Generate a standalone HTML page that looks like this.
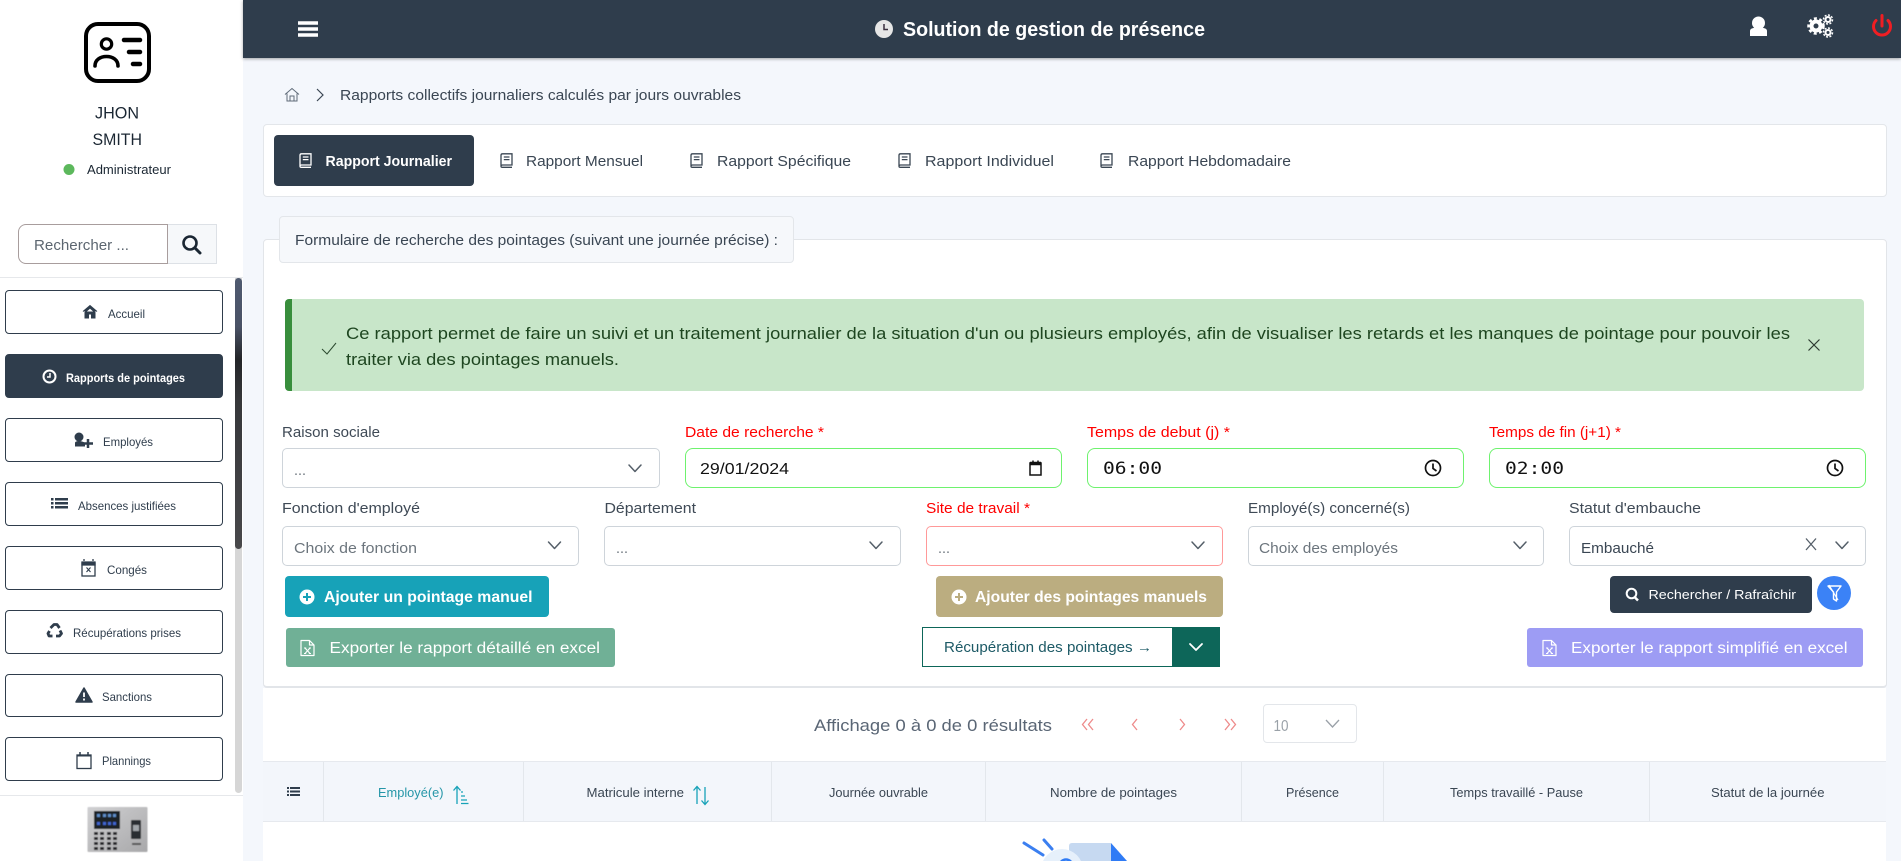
<!DOCTYPE html>
<html lang="fr"><head><meta charset="utf-8"><title>Solution de gestion de présence</title>
<style>
html,body{margin:0;padding:0;width:1901px;height:861px;overflow:hidden;background:#f4f7fc;font-family:"Liberation Sans",sans-serif}
.b{position:absolute;box-sizing:border-box}
.nav{left:5px;width:218px;height:44px;border:1px solid #2f3d4c;border-radius:4px;background:#fff}
.in{border:1px solid #ced4da;border-radius:5px;background:#fff}
.gr{border:1px solid #6ef26e;border-radius:8px;background:#fff}
svg.o{position:absolute;left:0;top:0}
text{font-family:"Liberation Sans",sans-serif;white-space:pre}
.n{font-size:12px;fill:#2f3d4c}
.t{font-size:14.5px;fill:#3a4653}
.l{font-size:14.5px;fill:#3f4a56}
.r{font-size:14.5px;fill:#f00}
.bt{font-size:15.5px;fill:#fff}
.h{font-size:12.5px;fill:#3a4653}
.m{font-family:"DejaVu Sans Mono",monospace;font-size:17px;fill:#111}
.ch{fill:none;stroke:#555f69;stroke-width:1.5;stroke-linecap:round;stroke-linejoin:round}
</style></head><body>
<div class="b" style="left:0;top:0;width:243px;height:861px;background:#fff"></div>
<div class="b" style="left:0;top:277px;width:243px;height:1px;background:#e6e8eb"></div>
<div class="b" style="left:0;top:795px;width:243px;height:1px;background:#e6e8eb"></div>
<div class="b" style="left:235px;top:278px;width:7px;height:515px;background:#d6d6d6;border-radius:0 0 4px 4px"></div>
<div class="b" style="left:235px;top:278px;width:7px;height:271px;border-radius:4px;background:linear-gradient(#4f5a70 0,#4a5266 18%,#232528 30%,#36373a 45%,#48484b 100%)"></div>
<div class="b" style="left:18px;top:224px;width:150px;height:40px;border:1px solid #a89d9d;border-radius:8px 0 0 8px;background:#fff"></div>
<div class="b" style="left:168px;top:224px;width:49px;height:40px;border:1px solid #dde1e6;border-left:0;background:#f6f8fa"></div>
<div class="b nav" style="top:290px"></div>
<div class="b nav" style="top:354px;background:#2f3d4c"></div>
<div class="b nav" style="top:418px"></div>
<div class="b nav" style="top:482px"></div>
<div class="b nav" style="top:546px"></div>
<div class="b nav" style="top:610px"></div>
<div class="b nav" style="top:674px;height:43px"></div>
<div class="b nav" style="top:737px"></div>

<div class="b" style="left:243px;top:0;width:1658px;height:58px;background:#2f3d4c;box-shadow:0 1px 3px rgba(0,0,0,.35)"></div>

<div class="b" style="left:263px;top:124px;width:1624px;height:73px;background:#fff;border:1px solid #e3e6ea;border-radius:4px"></div>
<div class="b" style="left:274px;top:135px;width:200px;height:51px;background:#2f3d4c;border-radius:4px"></div>

<div class="b" style="left:263px;top:239px;width:1624px;height:449px;background:#fff;border:1px solid #e2e5e9;border-bottom-width:2px;border-radius:4px"></div>
<div class="b" style="left:279px;top:216px;width:515px;height:47px;background:#f6f8fb;border:1px solid #e3e6ea;border-radius:4px"></div>

<div class="b" style="left:285px;top:299px;width:1579px;height:92px;background:#c8e6c9;border-left:7px solid #388e3c;border-radius:4px"></div>

<div class="b in" style="left:282px;top:448px;width:378px;height:40px"></div>
<div class="b gr" style="left:685px;top:448px;width:377px;height:40px"></div>
<div class="b gr" style="left:1087px;top:448px;width:377px;height:40px"></div>
<div class="b gr" style="left:1489px;top:448px;width:377px;height:40px"></div>

<div class="b in" style="left:282px;top:526px;width:297px;height:40px"></div>
<div class="b in" style="left:604px;top:526px;width:297px;height:40px"></div>
<div class="b in" style="left:926px;top:526px;width:297px;height:40px;border-color:#f99"></div>
<div class="b in" style="left:1248px;top:526px;width:296px;height:40px"></div>
<div class="b in" style="left:1569px;top:526px;width:297px;height:40px"></div>

<div class="b" style="left:285px;top:576px;width:264px;height:41px;background:#17a2b8;border-radius:4px"></div>
<div class="b" style="left:936px;top:576px;width:287px;height:41px;background:#bbad80;border-radius:4px"></div>
<div class="b" style="left:1610px;top:576px;width:202px;height:37px;background:#2f3d4c;border-radius:4px"></div>
<div class="b" style="left:1817px;top:576px;width:34px;height:34px;background:#3b82f6;border-radius:50%"></div>
<div class="b" style="left:286px;top:628px;width:329px;height:39px;background:#70b096;border-radius:3px"></div>
<div class="b" style="left:922px;top:627px;width:251px;height:40px;background:#fff;border:1.5px solid #0d6659"></div>
<div class="b" style="left:1172px;top:627px;width:48px;height:40px;background:#0d6659"></div>
<div class="b" style="left:1527px;top:628px;width:336px;height:39px;background:#9d9cf4;border-radius:3px"></div>

<div class="b" style="left:263px;top:688px;width:1623px;height:173px;background:#fff"></div>
<div class="b" style="left:1263px;top:704px;width:94px;height:39px;background:#fff;border:1px solid #e3e6ea;border-radius:4px"></div>
<div class="b" style="left:263px;top:761px;width:1623px;height:61px;background:#f3f6fb;border-top:1px solid #e6e9ee;border-bottom:1px solid #e6e9ee"></div>
<div class="b" style="left:323px;top:762px;width:1px;height:59px;background:#e3e7ec"></div>
<div class="b" style="left:523px;top:762px;width:1px;height:59px;background:#e3e7ec"></div>
<div class="b" style="left:771px;top:762px;width:1px;height:59px;background:#e3e7ec"></div>
<div class="b" style="left:985px;top:762px;width:1px;height:59px;background:#e3e7ec"></div>
<div class="b" style="left:1241px;top:762px;width:1px;height:59px;background:#e3e7ec"></div>
<div class="b" style="left:1383px;top:762px;width:1px;height:59px;background:#e3e7ec"></div>
<div class="b" style="left:1649px;top:762px;width:1px;height:59px;background:#e3e7ec"></div>

<svg class="o" width="1901" height="861" viewBox="0 0 1901 861" xmlns="http://www.w3.org/2000/svg">
<defs>
<symbol id="book" viewBox="0 0 13 15"><path d="M2.5 .8H12V12H2.5C1.5 12 1 12.6 1 13.2S1.5 14.3 2.5 14.3H12M1 13.2V2.3C1 1.4 1.6 .8 2.5 .8M3.8 4H9.5M3.8 6.6H9.5" fill="none" stroke="currentColor" stroke-width="1.3"/></symbol>
<symbol id="xl" viewBox="0 0 15 17"><path d="M1 1H9.5L14 5.5V16H1ZM9.5 1V5.5H14" fill="none" stroke="#fff" stroke-width="1.2" stroke-linejoin="round"/><path d="M5 8.5L10 14M10 8.5L5 14M4 8.5H6.2M8.8 8.5H11M4 14H6.2M8.8 14H11" fill="none" stroke="#fff" stroke-width="1.1"/></symbol>
<linearGradient id="dev" x1="0" y1="0" x2="1" y2="1"><stop offset="0" stop-color="#d0d0d2"/><stop offset="1" stop-color="#a8a8aa"/></linearGradient>
<filter id="sf" x="-5%" y="-5%" width="110%" height="110%"><feGaussianBlur stdDeviation=".45"/></filter>
</defs>

<!-- avatar -->
<rect x="86" y="24" width="63" height="57" rx="12" fill="none" stroke="#000" stroke-width="4"/>
<circle cx="106.5" cy="44" r="5.2" fill="none" stroke="#000" stroke-width="3.2"/>
<path d="M95 66C95 60 100 56.5 106.5 56.5S118 60 118 66" fill="none" stroke="#000" stroke-width="3.6" stroke-linecap="round"/>
<path d="M124 40H140M129 52H140M133 64H140" stroke="#000" stroke-width="4.5" stroke-linecap="round"/>
<text x="95" y="118.500" font-size="16.5" fill="#1b2733" textLength="44" lengthAdjust="spacingAndGlyphs">JHON</text>
<text x="92.5" y="144.800" font-size="16.5" fill="#1b2733" textLength="49.5" lengthAdjust="spacingAndGlyphs">SMITH</text>
<circle cx="69" cy="169.5" r="5.5" fill="#5cb85c"/>
<text x="87" y="174" font-size="12.5" fill="#1b2733" textLength="84" lengthAdjust="spacingAndGlyphs">Administrateur</text>
<text x="34" y="250" font-size="15" fill="#5c6670" textLength="95" lengthAdjust="spacingAndGlyphs">Rechercher ...</text>
<circle cx="190" cy="243" r="6.5" fill="none" stroke="#1b2733" stroke-width="2.6"/><path d="M195 248L200 253" stroke="#1b2733" stroke-width="3" stroke-linecap="round"/>

<!-- nav icons -->
<path d="M90 308L85 312.500V318H88.500V314H91.500V318H95V312.500ZM83 311.500L90 305.500L97 311.500" fill="#2f3d4c" stroke="#2f3d4c" stroke-width="1"/>
<circle cx="49.5" cy="376.5" r="6" fill="#2f3d4c" stroke="#fff" stroke-width="2"/><path d="M50 373V377H47" fill="none" stroke="#fff" stroke-width="1.5"/>
<circle cx="79" cy="437" r="4.500" fill="#2f3d4c"/><path d="M75 446.500V443C75 441.500 77 441 79 441S84 442 85 443V446.500Z" fill="#2f3d4c"/><path d="M83 443.500H93M88 439V448" stroke="#2f3d4c" stroke-width="2.5"/>
<path d="M51 498H53.500V500.500H51ZM51 502H53.500V504.500H51ZM51 506H53.500V508.500H51ZM55 498H68V500.500H55ZM55 502H68V504.500H55ZM55 506H68V508.500H55Z" fill="#2f3d4c"/>
<rect x="82" y="563" width="13" height="13" fill="none" stroke="#2f3d4c" stroke-width="1.3"/><path d="M82 562H95V565H82ZM84 561V559M93 561V559" stroke="#2f3d4c" stroke-width="1.3" fill="#2f3d4c"/><path d="M86.500 567.500L90.500 572M90.500 567.500L86.500 572" stroke="#2f3d4c" stroke-width="1.1"/>
<path d="M50.500 628L54 624.500H57L59.500 628M60 630.500L61.500 633.500L59.500 636H56M52.500 636H49L48 633.500L49.500 631" fill="none" stroke="#2f3d4c" stroke-width="2.8" stroke-linejoin="round"/>
<path d="M84 688L76 702H92Z" fill="#2f3d4c" stroke="#2f3d4c" stroke-width="1.5" stroke-linejoin="round"/><path d="M84 692.500V697M84 698.500V700.500" stroke="#fff" stroke-width="1.8"/>
<rect x="77" y="755" width="14" height="13.5" fill="none" stroke="#2f3d4c" stroke-width="1.3"/><path d="M77 755.500H91" stroke="#2f3d4c" stroke-width="2"/><path d="M80 755V752M88 755V752" stroke="#2f3d4c" stroke-width="1.5"/>

<!-- nav text -->
<text class="n" x="108" y="318" textLength="37" lengthAdjust="spacingAndGlyphs">Accueil</text>
<text class="n" x="66" y="382" font-weight="bold" style="fill:#fff" textLength="119" lengthAdjust="spacingAndGlyphs">Rapports de pointages</text>
<text class="n" x="103" y="446" textLength="50" lengthAdjust="spacingAndGlyphs">Employés</text>
<text class="n" x="78" y="510" textLength="98" lengthAdjust="spacingAndGlyphs">Absences justifiées</text>
<text class="n" x="107" y="574" textLength="40" lengthAdjust="spacingAndGlyphs">Congés</text>
<text class="n" x="73" y="637" textLength="108" lengthAdjust="spacingAndGlyphs">Récupérations prises</text>
<text class="n" x="102" y="701" textLength="50" lengthAdjust="spacingAndGlyphs">Sanctions</text>
<text class="n" x="102" y="765" textLength="49" lengthAdjust="spacingAndGlyphs">Plannings</text>

<!-- device -->
<g filter="url(#sf)">
<rect x="87.5" y="807" width="60" height="45" rx="1" fill="url(#dev)"/>
<rect x="94" y="811" width="26" height="18" fill="#1f2226"/>
<path d="M97 814h3v3h-3zM103 814h3v3h-3zM108 814h3v3h-3zM113 814h3v3h-3z" fill="#5f8fc9"/>
<path d="M97 822h3v3h-3zM103 822h3v3h-3zM108 822h3v3h-3zM113 822h3v3h-3z" fill="#3f66d0"/>
<path d="M94 832h4v3h-4zM100 832h4v3h-4zM107 832h4v3h-4zM113 832h4v3h-4zM94 837h4v3h-4zM100 837h4v3h-4zM107 837h4v3h-4zM113 837h4v3h-4zM94 842h4v3h-4zM100 842h4v3h-4zM107 842h4v3h-4zM113 842h4v3h-4zM94 847h4v3h-4zM100 847h4v3h-4zM107 847h4v3h-4zM113 847h4v3h-4z" fill="#26282c"/>
<rect x="131" y="820" width="10" height="19" rx="1" fill="#2a2d30"/><rect x="133" y="825" width="6" height="6" fill="#a0a5a9"/>
<rect x="132" y="843" width="9" height="2" fill="#555"/>
</g>

<!-- header -->
<path d="M298 23H318M298 29H318M298 35H318" stroke="#fff" stroke-width="3.5"/>
<circle cx="884" cy="29" r="9" fill="#e6e6e6"/><path d="M884 24V29.5H888" fill="none" stroke="#3a2f3f" stroke-width="1.5"/>
<text x="903" y="36" font-size="20" font-weight="bold" fill="#fff" textLength="302" lengthAdjust="spacingAndGlyphs">Solution de gestion de présence</text>
<circle cx="1758.5" cy="23" r="6.5" fill="#fff"/><path d="M1750 36V31C1750 28.500 1753 27.500 1758.5 27.500S1767 28.500 1767 31V36Z" fill="#fff"/>
<g fill="none" stroke="#fff"><circle cx="1816" cy="26" r="4.500" stroke-width="4"/><circle cx="1816" cy="26" r="7.500" stroke-width="2.500" stroke-dasharray="3 2.500"/><circle cx="1828" cy="19.500" r="2.500" stroke-width="2"/><circle cx="1828" cy="19.500" r="4.500" stroke-width="1.500" stroke-dasharray="2 1.500"/><circle cx="1828" cy="32.500" r="2.500" stroke-width="2"/><circle cx="1828" cy="32.500" r="4.500" stroke-width="1.500" stroke-dasharray="2 1.500"/></g>
<path d="M1876 20.500A8.500 8.500 0 1 0 1888 20.500M1882 15.500V26" fill="none" stroke="#f01e23" stroke-width="3" stroke-linecap="round"/>

<!-- breadcrumb -->
<path d="M285 94.500L292 88.500L299 94.500M287 93.500V101H297V93.500M290 101V96H294V101" fill="none" stroke="#5f6b78" stroke-width="1"/>
<path d="M317 89L323 95L317 101" fill="none" stroke="#3a4653" stroke-width="1.2"/>
<text class="t" x="340" y="100" textLength="401" lengthAdjust="spacingAndGlyphs">Rapports collectifs journaliers calculés par jours ouvrables</text>

<!-- tabs -->
<use href="#book" x="299" y="153" width="13" height="15" color="#fff"/>
<text class="t" x="325.5" y="166" font-weight="bold" style="fill:#fff" textLength="126.5" lengthAdjust="spacingAndGlyphs">Rapport Journalier</text>
<use href="#book" x="500" y="153" width="13" height="15" color="#3a4653"/>
<text class="t" x="526" y="166" textLength="117" lengthAdjust="spacingAndGlyphs">Rapport Mensuel</text>
<use href="#book" x="690" y="153" width="13" height="15" color="#3a4653"/>
<text class="t" x="717" y="166" textLength="134" lengthAdjust="spacingAndGlyphs">Rapport Spécifique</text>
<use href="#book" x="898" y="153" width="13" height="15" color="#3a4653"/>
<text class="t" x="925" y="166" textLength="129" lengthAdjust="spacingAndGlyphs">Rapport Individuel</text>
<use href="#book" x="1100" y="153" width="13" height="15" color="#3a4653"/>
<text class="t" x="1128" y="166" textLength="163" lengthAdjust="spacingAndGlyphs">Rapport Hebdomadaire</text>

<text class="t" x="295" y="245" textLength="483" lengthAdjust="spacingAndGlyphs">Formulaire de recherche des pointages (suivant une journée précise) :</text>

<!-- alert -->
<path d="M322 349L327 354L336 343" fill="none" stroke="#2c4a30" stroke-width="1"/>
<text x="346" y="339" font-size="16.5" fill="#1e4620" textLength="1444" lengthAdjust="spacingAndGlyphs">Ce rapport permet de faire un suivi et un traitement journalier de la situation d'un ou plusieurs employés, afin de visualiser les retards et les manques de pointage pour pouvoir les</text>
<text x="346" y="365" font-size="16.5" fill="#1e4620" textLength="273" lengthAdjust="spacingAndGlyphs">traiter via des pointages manuels.</text>
<path d="M1808.5 339.5L1819.5 350.5M1819.5 339.5L1808.5 350.5" stroke="#2c3a30" stroke-width="1.2"/>

<!-- labels -->
<text class="l" x="282" y="437" textLength="98" lengthAdjust="spacingAndGlyphs">Raison sociale</text>
<text class="r" x="685" y="437" textLength="139" lengthAdjust="spacingAndGlyphs">Date de recherche *</text>
<text class="r" x="1087" y="437" textLength="143" lengthAdjust="spacingAndGlyphs">Temps de debut (j) *</text>
<text class="r" x="1489" y="437" textLength="132" lengthAdjust="spacingAndGlyphs">Temps de fin (j+1) *</text>
<text class="l" x="282" y="513" textLength="138" lengthAdjust="spacingAndGlyphs">Fonction d'employé</text>
<text class="l" x="604.5" y="513" textLength="91.5" lengthAdjust="spacingAndGlyphs">Département</text>
<text class="r" x="926" y="513" textLength="104" lengthAdjust="spacingAndGlyphs">Site de travail *</text>
<text class="l" x="1248" y="513" textLength="162" lengthAdjust="spacingAndGlyphs">Employé(s) concerné(s)</text>
<text class="l" x="1569" y="513" textLength="132" lengthAdjust="spacingAndGlyphs">Statut d'embauche</text>

<!-- inputs -->
<text x="294" y="475" font-size="14.5" fill="#6c757d" textLength="12" lengthAdjust="spacingAndGlyphs">...</text>
<path class="ch" d="M629 465L635 471.500L641 465"/>
<text x="700" y="474" font-size="15.5" fill="#111" textLength="89" lengthAdjust="spacingAndGlyphs">29/01/2024</text>
<path d="M1030 463H1041V475H1030Z" fill="none" stroke="#111" stroke-width="1.5"/><path d="M1030 463.500H1041" stroke="#111" stroke-width="3.5"/><path d="M1033 460.500V462M1038 460.500V462" stroke="#111" stroke-width="1.5"/>
<text class="m" x="1103" y="474" textLength="59" lengthAdjust="spacingAndGlyphs">06:00</text>
<text class="m" x="1505" y="474" textLength="59" lengthAdjust="spacingAndGlyphs">02:00</text>
<g fill="none" stroke="#111" stroke-width="1.7"><circle cx="1433" cy="468" r="7.500"/><path d="M1433 463.500V468.500L1436.500 471"/><circle cx="1835" cy="468" r="7.500"/><path d="M1835 463.500V468.500L1838.500 471"/></g>

<text x="294" y="553" font-size="14.5" fill="#6c757d" textLength="123" lengthAdjust="spacingAndGlyphs">Choix de fonction</text>
<path class="ch" d="M548.500 542L554.500 548.500L560.500 542"/>
<text x="616" y="553" font-size="14.5" fill="#6c757d" textLength="12" lengthAdjust="spacingAndGlyphs">...</text>
<path class="ch" d="M870 542L876 548.500L882 542"/>
<text x="938" y="553" font-size="14.5" fill="#6c757d" textLength="12" lengthAdjust="spacingAndGlyphs">...</text>
<path class="ch" d="M1192 542L1198 548.500L1204 542"/>
<text x="1259" y="553" font-size="14.5" fill="#6c757d" textLength="139" lengthAdjust="spacingAndGlyphs">Choix des employés</text>
<path class="ch" d="M1514 542L1520 548.500L1526 542"/>
<text x="1581" y="553" font-size="14.5" fill="#3a4653" textLength="73" lengthAdjust="spacingAndGlyphs">Embauché</text>
<path d="M1806 538.500L1816 550M1816 538.500L1806 550" stroke="#555f69" stroke-width="1.3"/>
<path class="ch" d="M1836 542L1842 548.500L1848 542"/>

<!-- buttons -->
<circle cx="307" cy="597" r="7.500" fill="#fff"/><path d="M303 597H311M307 593V601" stroke="#17a2b8" stroke-width="2"/>
<text class="bt" x="324" y="602" font-weight="bold" textLength="208.5" lengthAdjust="spacingAndGlyphs">Ajouter un pointage manuel</text>
<circle cx="959" cy="597" r="7.500" fill="#fff"/><path d="M955 597H963M959 593V601" stroke="#bbad80" stroke-width="2"/>
<text class="bt" x="975" y="602" font-weight="bold" textLength="232" lengthAdjust="spacingAndGlyphs">Ajouter des pointages manuels</text>
<circle cx="1631.5" cy="593.5" r="4.800" fill="none" stroke="#fff" stroke-width="2"/><path d="M1635 597.500L1638 600.500" stroke="#fff" stroke-width="2.5"/>
<text x="1648.5" y="599" font-size="13" fill="#fff" textLength="147.5" lengthAdjust="spacingAndGlyphs">Rechercher / Rafraîchir</text>
<path d="M1828 586H1841L1836.500 592V601L1833.500 599V592Z" fill="none" stroke="#fff" stroke-width="1.4" stroke-linejoin="round"/><path d="M1829 585L1838 600" stroke="#fff" stroke-width="1.2"/>

<use href="#xl" x="300" y="639.5" width="15" height="17"/>
<text class="bt" x="329.5" y="653" textLength="270.5" lengthAdjust="spacingAndGlyphs">Exporter le rapport détaillé en excel</text>
<text x="944" y="652" font-size="14.5" fill="#1d5a66" textLength="208" lengthAdjust="spacingAndGlyphs">Récupération des pointages →</text>
<path d="M1190 644L1196 650L1202 644" fill="none" stroke="#fff" stroke-width="1.8" stroke-linecap="round" stroke-linejoin="round"/>
<use href="#xl" x="1542" y="639.5" width="15" height="17"/>
<text class="bt" x="1571" y="653" textLength="276.5" lengthAdjust="spacingAndGlyphs">Exporter le rapport simplifié en excel</text>

<!-- pagination -->
<text x="814" y="731" font-size="17" fill="#5a6675" textLength="238" lengthAdjust="spacingAndGlyphs">Affichage 0 à 0 de 0 résultats</text>
<g fill="none" stroke="#ee8a8a" stroke-width="1.3"><path d="M1087 719L1082.500 724.500L1087 730M1093 719L1088.500 724.500L1093 730"/><path d="M1137 719L1132.500 724.500L1137 730"/><path d="M1180 719L1184.500 724.500L1180 730"/><path d="M1225 719L1229.500 724.500L1225 730M1231 719L1235.500 724.500L1231 730"/></g>
<text x="1273.5" y="731" font-size="16" fill="#9aa1a8" textLength="15" lengthAdjust="spacingAndGlyphs">10</text>
<path d="M1326 720L1332.500 727L1339 720" fill="none" stroke="#9aa1a8" stroke-width="1.3"/>

<!-- table head -->
<path d="M287 787H289V789H287ZM287 790.500H289V792.500H287ZM287 794H289V796H287ZM290 787H300V789H290ZM290 790.500H300V792.500H290ZM290 794H300V796H290Z" fill="#2f3d4c"/>
<text class="h" x="378" y="797" style="fill:#2596a8" textLength="65.5" lengthAdjust="spacingAndGlyphs">Employé(e)</text>
<path d="M457 804V787M453.500 790.500L457 786.500L460.500 790.500" fill="none" stroke="#17a2b8" stroke-width="1.3"/><path d="M461 792H463M461 796H465M461 800H467M461 803.500H468.500" stroke="#17a2b8" stroke-width="1.2"/>
<text class="h" x="586.5" y="797" textLength="97.5" lengthAdjust="spacingAndGlyphs">Matricule interne</text>
<path d="M697 804V787M693.500 790.500L697 786.500L700.500 790.500M705 787V804M701.500 800.500L705 804.500L708.500 800.500" fill="none" stroke="#17a2b8" stroke-width="1.3"/>
<text class="h" x="829" y="797" textLength="99" lengthAdjust="spacingAndGlyphs">Journée ouvrable</text>
<text class="h" x="1050" y="797" textLength="127" lengthAdjust="spacingAndGlyphs">Nombre de pointages</text>
<text class="h" x="1286" y="797" textLength="53" lengthAdjust="spacingAndGlyphs">Présence</text>
<text class="h" x="1450" y="797" textLength="133" lengthAdjust="spacingAndGlyphs">Temps travaillé - Pause</text>
<text class="h" x="1711" y="797" textLength="113.5" lengthAdjust="spacingAndGlyphs">Statut de la journée</text>

<!-- illustration -->
<path d="M1024 843L1043 855M1044 840L1052 849" stroke="#3b7ff0" stroke-width="3" stroke-linecap="round"/>
<path d="M1069 861V846Q1069 843 1072 843H1111V861Z" fill="#c6d9f1"/>
<path d="M1111 843L1127 861H1111Z" fill="#2f7bf5"/>
<circle cx="1062" cy="870" r="21" fill="#e6f0fb"/>
<circle cx="1066" cy="866" r="6.5" fill="none" stroke="#2f7bf5" stroke-width="2.5"/>
</svg>
</body></html>
